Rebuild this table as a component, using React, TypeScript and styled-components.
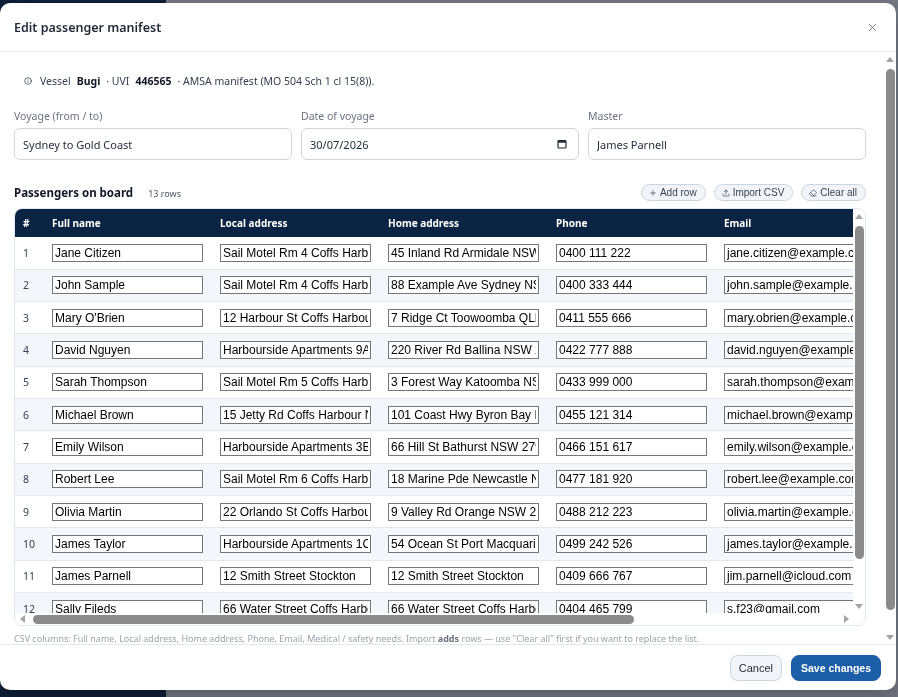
import React from "react"
import styled, { createGlobalStyle } from "styled-components"
import { Info, X, Plus, Upload, Eraser } from "lucide-react"

const GlobalStyle = createGlobalStyle`
  *, *::before, *::after { box-sizing: border-box; }
  html, body { margin: 0; padding: 0; height: 100%; }
  body {
    font-family: "Noto Sans", "Segoe UI", sans-serif;
    background: #fff;
    overflow: hidden;
  }
`

const Page = styled.div`
  display: flex;
  height: 100vh;
`

const Sidebar = styled.aside`
  width: 166px;
  background: #0f2a4f;
`

const Main = styled.main`
  flex: 1;
  background: #fff;
`

const Backdrop = styled.div`
  position: fixed;
  inset: 0;
  background: rgba(15, 23, 42, 0.58);
  display: flex;
  align-items: flex-start;
  padding: 3px 2px 0 0;
`

const Modal = styled.div`
  width: 896px;
  height: 687px;
  background: #fff;
  border-radius: 10px;
  display: flex;
  flex-direction: column;
  overflow: hidden;
  box-shadow: 0 10px 30px rgba(0, 0, 0, 0.25);
`

const Header = styled.header`
  flex-shrink: 0;
  height: 49px;
  display: flex;
  align-items: center;
  justify-content: space-between;
  padding: 0 14px;
  border-bottom: 1px solid #e5e7eb;
`

const Title = styled.h2`
  margin: 0;
  font-size: 12.5px;
  font-weight: 600;
  color: #1f2937;
`

const CloseButton = styled.button`
  border: none;
  background: none;
  padding: 3px;
  display: flex;
  color: #6b7280;
  cursor: pointer;
`

/* ---- fake classic scrollbars (the browser hides the real ones) ---- */

const ScrollBar = styled.div<{ $horizontal?: boolean }>`
  flex-shrink: 0;
  display: flex;
  flex-direction: ${p => (p.$horizontal ? "row" : "column")};
  ${p => (p.$horizontal ? "height: 12px;" : "width: 12px;")}
  background: #fff;
`

const ScrollArrow = styled.div<{ $dir: "up" | "down" | "left" | "right" }>`
  flex-shrink: 0;
  width: ${p => (p.$dir === "up" || p.$dir === "down" ? "12px" : "14px")};
  height: ${p => (p.$dir === "up" || p.$dir === "down" ? "14px" : "12px")};
  display: flex;
  align-items: center;
  justify-content: center;

  &::before {
    content: "";
    width: 0;
    height: 0;
    ${p =>
      p.$dir === "up"
        ? "border-left: 4px solid transparent; border-right: 4px solid transparent; border-bottom: 5px solid #a3a3a3;"
        : p.$dir === "down"
        ? "border-left: 4px solid transparent; border-right: 4px solid transparent; border-top: 5px solid #a3a3a3;"
        : p.$dir === "left"
        ? "border-top: 4px solid transparent; border-bottom: 4px solid transparent; border-right: 5px solid #a3a3a3;"
        : "border-top: 4px solid transparent; border-bottom: 4px solid transparent; border-left: 5px solid #a3a3a3;"}
  }
`

const Track = styled.div<{ $horizontal?: boolean }>`
  flex: 1;
  display: flex;
  flex-direction: ${p => (p.$horizontal ? "row" : "column")};
  align-items: center;
  padding: ${p => (p.$horizontal ? "0 4px" : "3px 0")};
`

const Thumb = styled.div<{ $horizontal?: boolean; $length: number }>`
  background: #8b8b8b;
  border-radius: 5px;
  ${p => (p.$horizontal ? `width: ${p.$length}px; height: 9px;` : `height: ${p.$length}px; width: 9px;`)}
`

const VScroll = ({ thumb }: { thumb: number }) => (
  <ScrollBar>
    <ScrollArrow $dir="up" />
    <Track>
      <Thumb $length={thumb} />
    </Track>
    <ScrollArrow $dir="down" />
  </ScrollBar>
)

const HScroll = ({ thumb }: { thumb: number }) => (
  <ScrollBar $horizontal>
    <ScrollArrow $dir="left" />
    <Track $horizontal>
      <Thumb $horizontal $length={thumb} />
    </Track>
    <ScrollArrow $dir="right" />
  </ScrollBar>
)

/* ---- body ---- */

const Body = styled.div`
  flex: 1;
  min-height: 0;
  display: flex;
`

const BodyContent = styled.div`
  flex: 1;
  min-width: 0;
  overflow: hidden;
  padding: 18px 18px 0 14px;
`

const InfoLine = styled.div`
  display: flex;
  align-items: center;
  padding: 3px 10px;
  font-size: 10.5px;
  line-height: 16px;
  color: #374151;

  svg {
    margin-right: 8px;
    flex-shrink: 0;
  }
`

const Strong = styled.strong`
  font-weight: 700;
  color: #111827;
  margin: 0 6px;
`

const Fields = styled.div`
  display: grid;
  grid-template-columns: repeat(3, 1fr);
  gap: 9px;
  margin-top: 17px;
`

const Label = styled.label`
  display: block;
  font-size: 10.5px;
  line-height: 14px;
  color: #6b7280;
  margin-bottom: 5px;
`

const Shell = styled.div`
  height: 32px;
  border: 1px solid #d1d5db;
  border-radius: 6px;
  display: flex;
  align-items: center;
  padding: 0 11px 0 8px;
  background: #fff;
`

const TextInput = styled.input`
  flex: 1;
  min-width: 0;
  border: none;
  outline: none;
  padding: 0;
  background: transparent;
  font-family: "Noto Sans", sans-serif;
  font-size: 11px;
  color: #1f2937;
`

const SectionHead = styled.div`
  margin-top: 24px;
  height: 17px;
  display: flex;
  align-items: center;
  justify-content: space-between;
`

const SectionTitle = styled.h3`
  margin: 0;
  font-size: 11.5px;
  font-weight: 700;
  color: #111827;
  display: flex;
  align-items: baseline;
`

const Count = styled.span`
  font-size: 9px;
  font-weight: 400;
  color: #4b5563;
  margin-left: 15px;
`

const Actions = styled.div`
  display: flex;
  gap: 8px;
`

const PillButton = styled.button`
  display: inline-flex;
  align-items: center;
  gap: 3px;
  height: 17px;
  padding: 0 8px 0 7px;
  border: 1px solid #cbd5e1;
  border-radius: 999px;
  background: #f1f5f9;
  font-family: "Liberation Sans", Arial, sans-serif;
  font-size: 10px;
  color: #374151;
  cursor: pointer;
`

const TableBox = styled.div`
  margin-top: 7px;
  height: 418px;
  border: 1px solid #e2e8f0;
  border-radius: 8px;
  overflow: hidden;
  display: grid;
  grid-template-columns: minmax(0, 1fr) 12px;
  grid-template-rows: minmax(0, 1fr) 12px;
  background: #fff;
`

const TableViewport = styled.div`
  overflow: hidden;
`

const Corner = styled.div`
  background: #fff;
`

const Table = styled.table`
  border-collapse: collapse;
  border-spacing: 0;
  table-layout: fixed;
  width: 1089px;
`

const Th = styled.th`
  background: #0c2444;
  color: #fff;
  font-size: 10px;
  font-weight: 700;
  text-align: left;
  padding: 0 8px;
  height: 28px;
  white-space: nowrap;
`

const Row = styled.tr<{ $shade: boolean }>`
  height: 32.33px;
  background: ${p => (p.$shade ? "#f3f6fa" : "#fff")};
`

const Td = styled.td`
  padding: 0 8px;
  border-bottom: 1px solid #e3e8ef;
  font-size: 10.5px;
  color: #374151;
  vertical-align: middle;
`

const CellInput = styled.input<{ $wide?: boolean }>`
  display: block;
  width: ${p => (p.$wide ? "220px" : "151px")};
  height: 18px;
  border: 1px solid #767676;
  border-radius: 0;
  padding: 0 2px;
  background: #fff;
  font-family: "Liberation Sans", Arial, sans-serif;
  font-size: 12px;
  color: #000;
`

const Note = styled.p`
  margin: 7px 0 0;
  font-size: 9px;
  line-height: 12px;
  color: #9ca3af;
  white-space: nowrap;

  b {
    color: #6b7280;
  }
`

const Footer = styled.footer`
  flex-shrink: 0;
  height: 46px;
  display: flex;
  align-items: center;
  justify-content: flex-end;
  gap: 9px;
  padding: 0 15px;
  border-top: 1px solid #e5e7eb;
`

const FooterButton = styled.button<{ $primary?: boolean }>`
  height: 26px;
  padding: 0 ${p => (p.$primary ? "9px" : "8px")};
  border-radius: 8px;
  border: 1px solid ${p => (p.$primary ? "#1d5ea8" : "#cbd5e1")};
  background: ${p => (p.$primary ? "#1d5ea8" : "#f1f5f9")};
  color: ${p => (p.$primary ? "#fff" : "#1f2937")};
  font-family: "Liberation Sans", Arial, sans-serif;
  font-size: ${p => (p.$primary ? "10.5px" : "11px")};
  font-weight: ${p => (p.$primary ? 700 : 400)};
  cursor: pointer;
`

const CalendarIcon = () => (
  <svg width="10" height="10" viewBox="0 0 10 10">
    <rect x="1" y="1.5" width="8" height="7.5" rx="1" fill="none" stroke="#1f2937" strokeWidth="1.2" />
    <rect x="1" y="1.5" width="8" height="2.2" fill="#1f2937" />
  </svg>
)

const columns = ["Full name", "Local address", "Home address", "Phone", "Email", "Medical / safety needs"]
const colWidths = [168, 168, 168, 168, 168, 250]

const passengers = [
  ["Jane Citizen", "Sail Motel Rm 4 Coffs Harbour", "45 Inland Rd Armidale NSW 2350", "0400 111 222", "jane.citizen@example.com", ""],
  ["John Sample", "Sail Motel Rm 4 Coffs Harbour", "88 Example Ave Sydney NSW 2000", "0400 333 444", "john.sample@example.com", ""],
  ["Mary O'Brien", "12 Harbour St Coffs Harbour", "7 Ridge Ct Toowoomba QLD 4350", "0411 555 666", "mary.obrien@example.com", ""],
  ["David Nguyen", "Harbourside Apartments 9A", "220 River Rd Ballina NSW 2478", "0422 777 888", "david.nguyen@example.com", ""],
  ["Sarah Thompson", "Sail Motel Rm 5 Coffs Harbour", "3 Forest Way Katoomba NSW 2780", "0433 999 000", "sarah.thompson@example.com", ""],
  ["Michael Brown", "15 Jetty Rd Coffs Harbour NSW", "101 Coast Hwy Byron Bay NSW 2481", "0455 121 314", "michael.brown@example.com", ""],
  ["Emily Wilson", "Harbourside Apartments 3B", "66 Hill St Bathurst NSW 2795", "0466 151 617", "emily.wilson@example.com", ""],
  ["Robert Lee", "Sail Motel Rm 6 Coffs Harbour", "18 Marine Pde Newcastle NSW 2300", "0477 181 920", "robert.lee@example.com", ""],
  ["Olivia Martin", "22 Orlando St Coffs Harbour", "9 Valley Rd Orange NSW 2800", "0488 212 223", "olivia.martin@example.com", ""],
  ["James Taylor", "Harbourside Apartments 1C", "54 Ocean St Port Macquarie NSW 2444", "0499 242 526", "james.taylor@example.com", ""],
  ["James Parnell", "12 Smith Street Stockton", "12 Smith Street Stockton", "0409 666 767", "jim.parnell@icloud.com", ""],
  ["Sally Fileds", "66 Water Street Coffs Harbour", "66 Water Street Coffs Harbour", "0404 465 799", "s.f23@gmail.com", ""],
  ["Tom Fileds", "66 Water Street Coffs Harbour", "66 Water Street Coffs Harbour", "0404 465 800", "tom.f@gmail.com", ""],
]

// scrollbar thumbs sized from what is visible vs. the full content
const BODY_VIEW = 592
const BODY_CONTENT = 611
const BODY_TRACK = BODY_VIEW - 28 - 6
const TABLE_VIEW_H = 404
const TABLE_CONTENT_H = 28 + passengers.length * 32.33
const TABLE_TRACK_H = TABLE_VIEW_H - 28 - 6
const TABLE_VIEW_W = 838
const TABLE_CONTENT_W = 29 + colWidths.reduce((a, b) => a + b, 0)
const TABLE_TRACK_W = TABLE_VIEW_W - 28 - 8

export default function App() {
  return (
    <>
      <GlobalStyle />
      <Page>
        <Sidebar />
        <Main />
      </Page>
      <Backdrop>
        <Modal>
          <Header>
            <Title>Edit passenger manifest</Title>
            <CloseButton aria-label="Close">
              <X size={13} strokeWidth={1.6} />
            </CloseButton>
          </Header>

          <Body>
            <BodyContent>
              <InfoLine>
                <Info size={8} strokeWidth={2.2} />
                Vessel<Strong>Bugi</Strong> · UVI<Strong>446565</Strong> · AMSA manifest (MO 504 Sch 1 cl 15(8)).
              </InfoLine>

              <Fields>
                <div>
                  <Label>Voyage (from / to)</Label>
                  <Shell>
                    <TextInput defaultValue="Sydney to Gold Coast" />
                  </Shell>
                </div>
                <div>
                  <Label>Date of voyage</Label>
                  <Shell>
                    <TextInput defaultValue="30/07/2026" />
                    <CalendarIcon />
                  </Shell>
                </div>
                <div>
                  <Label>Master</Label>
                  <Shell>
                    <TextInput defaultValue="James Parnell" />
                  </Shell>
                </div>
              </Fields>

              <SectionHead>
                <SectionTitle>
                  Passengers on board<Count>13 rows</Count>
                </SectionTitle>
                <Actions>
                  <PillButton>
                    <Plus size={8} strokeWidth={2} /> Add row
                  </PillButton>
                  <PillButton>
                    <Upload size={8} strokeWidth={2} /> Import CSV
                  </PillButton>
                  <PillButton>
                    <Eraser size={8} strokeWidth={2} /> Clear all
                  </PillButton>
                </Actions>
              </SectionHead>

              <TableBox>
                <TableViewport>
                  <Table>
                    <colgroup>
                      <col style={{ width: 29 }} />
                      {colWidths.map((w, i) => (
                        <col key={i} style={{ width: w }} />
                      ))}
                    </colgroup>
                    <thead>
                      <tr>
                        <Th>#</Th>
                        {columns.map(c => (
                          <Th key={c}>{c}</Th>
                        ))}
                      </tr>
                    </thead>
                    <tbody>
                      {passengers.map((p, i) => (
                        <Row key={i} $shade={i % 2 === 1}>
                          <Td>{i + 1}</Td>
                          {p.map((v, j) => (
                            <Td key={j}>
                              <CellInput defaultValue={v} $wide={j === 5} />
                            </Td>
                          ))}
                        </Row>
                      ))}
                    </tbody>
                  </Table>
                </TableViewport>
                <VScroll thumb={Math.round((TABLE_TRACK_H * TABLE_VIEW_H) / TABLE_CONTENT_H)} />
                <HScroll thumb={Math.round((TABLE_TRACK_W * TABLE_VIEW_W) / TABLE_CONTENT_W)} />
                <Corner />
              </TableBox>

              <Note>
                CSV columns: Full name, Local address, Home address, Phone, Email, Medical / safety needs. Import <b>adds</b> rows — use "Clear all" first if you want to replace the list.
              </Note>
            </BodyContent>
            <VScroll thumb={Math.round((BODY_TRACK * BODY_VIEW) / BODY_CONTENT)} />
          </Body>

          <Footer>
            <FooterButton>Cancel</FooterButton>
            <FooterButton $primary>Save changes</FooterButton>
          </Footer>
        </Modal>
      </Backdrop>
    </>
  )
}
